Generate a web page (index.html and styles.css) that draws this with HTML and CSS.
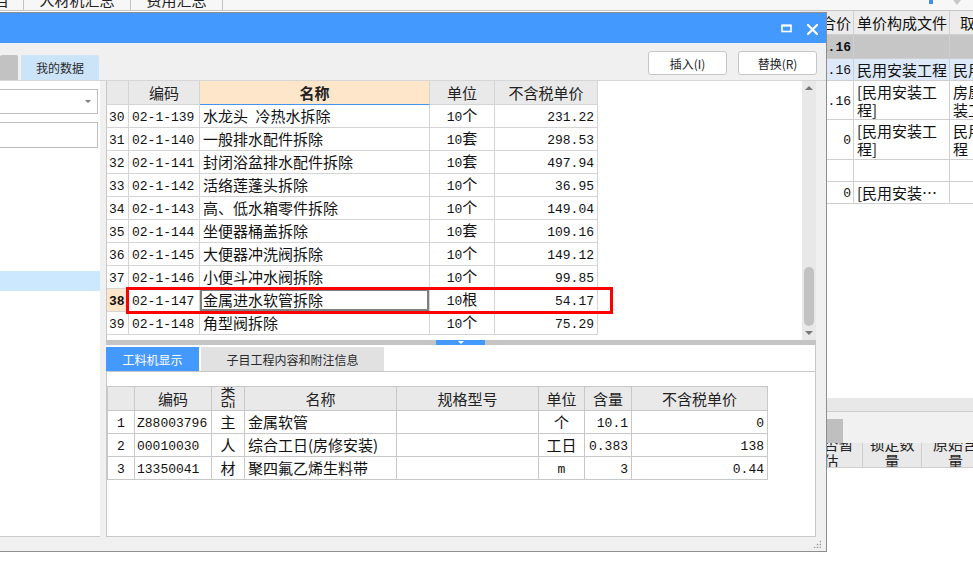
FILE: index.html
```html
<!DOCTYPE html>
<html lang="zh-CN">
<head>
<meta charset="utf-8">
<title>清单指引</title>
<link rel="stylesheet" href="styles.css">
</head>
<body>
<div class="app">
  <div class="app-tabs">
    <div class="app-tab first"><span>其他项目</span></div>
    <div class="app-tab t2"><span>人材机汇总</span></div>
    <div class="app-tab t3"><span>费用汇总</span></div>
    <div class="app-tools"><i class="mark"></i><i class="caret"></i></div>
  </div>
  <div class="app-body">
    <div class="app-hidden"></div>
    <div class="app-right">
      <table class="bgt">
        <colgroup><col class="bw1"><col class="bw2"><col class="bw3"></colgroup>
        <tr class="bh"><th class="r">合价</th><th>单价构成文件</th><th class="l12">取费专业</th></tr>
        <tr class="bsum"><td class="r"><span class="n b">541.16</span></td><td></td><td></td></tr>
        <tr class="bsel"><td class="r"><span class="n">541.16</span></td><td>民用安装工程</td><td>民用安装工程</td></tr>
        <tr class="btall"><td class="r mid"><span class="n">541.16</span></td><td class="top">[民用安装工<br>程]</td><td class="top">房屋修缮安<br>装工程</td></tr>
        <tr class="btall2"><td class="r mid"><span class="n">0</span></td><td class="top">[民用安装工<br>程]</td><td class="top">民用安装工<br>程</td></tr>
        <tr class="brow"><td></td><td></td><td></td></tr>
        <tr class="brow"><td class="r"><span class="n">0</span></td><td>[民用安装…</td><td></td></tr>
      </table>
      <div class="bg-band"></div>
      <div class="bg-strip"><div class="bg-block"></div></div>
      <div class="bg-head">
        <div class="bg-hc w63"><div>是否暂<br>估</div></div>
        <div class="bg-hc w59"><div>锁定数<br>量</div></div>
        <div class="bg-hc w68"><div>原始含<br>量</div></div>
      </div>
    </div>
  </div>
</div>

<div class="dialog">
  <div class="titlebar">
    <span class="tb-btn max"><svg width="11" height="9" viewBox="0 0 11 9"><rect x="1" y="1.5" width="9" height="6" fill="none" stroke="#fff" stroke-width="1.6"/><rect x="0.5" y="0.5" width="10" height="2" fill="#fff"/></svg></span>
    <span class="tb-btn close"><svg width="11" height="11" viewBox="0 0 11 11"><path d="M1 1L10 10M10 1L1 10" stroke="#fff" stroke-width="2.2" stroke-linecap="square"/></svg></span>
  </div>
  <div class="toolbar">
    <div class="ttab gray"></div>
    <div class="ttab active">我的数据</div>
    <button class="btn first-btn">插入(I)</button>
    <button class="btn">替换(R)</button>
  </div>
  <div class="content">
    <div class="leftpane">
      <div class="combo"><i class="dd"></i></div>
      <div class="input"></div>
      <div class="sel-row"></div>
    </div>
    <div class="vsplit"></div>
    <div class="mainpane">
      <div class="upper">
        <div class="grid-wrap">
          <table class="grid">
            <colgroup><col class="g1"><col class="g2"><col class="g3"><col class="g4"><col class="g5"></colgroup>
            <tr class="hd"><th></th><th>编码</th><th class="cur">名称</th><th>单位</th><th>不含税单价</th></tr>
            <tr><td class="rn"><span class="n">30</span></td><td><span class="n">02-1-139</span></td><td>水龙头&ensp;冷热水拆除</td><td class="c"><span class="n">10</span>个</td><td class="r"><span class="n">231.22</span></td></tr>
            <tr><td class="rn"><span class="n">31</span></td><td><span class="n">02-1-140</span></td><td>一般排水配件拆除</td><td class="c"><span class="n">10</span>套</td><td class="r"><span class="n">298.53</span></td></tr>
            <tr><td class="rn"><span class="n">32</span></td><td><span class="n">02-1-141</span></td><td>封闭浴盆排水配件拆除</td><td class="c"><span class="n">10</span>套</td><td class="r"><span class="n">497.94</span></td></tr>
            <tr><td class="rn"><span class="n">33</span></td><td><span class="n">02-1-142</span></td><td>活络莲蓬头拆除</td><td class="c"><span class="n">10</span>个</td><td class="r"><span class="n">36.95</span></td></tr>
            <tr><td class="rn"><span class="n">34</span></td><td><span class="n">02-1-143</span></td><td>高、低水箱零件拆除</td><td class="c"><span class="n">10</span>个</td><td class="r"><span class="n">149.04</span></td></tr>
            <tr><td class="rn"><span class="n">35</span></td><td><span class="n">02-1-144</span></td><td>坐便器桶盖拆除</td><td class="c"><span class="n">10</span>套</td><td class="r"><span class="n">109.16</span></td></tr>
            <tr><td class="rn"><span class="n">36</span></td><td><span class="n">02-1-145</span></td><td>大便器冲洗阀拆除</td><td class="c"><span class="n">10</span>个</td><td class="r"><span class="n">149.12</span></td></tr>
            <tr><td class="rn"><span class="n">37</span></td><td><span class="n">02-1-146</span></td><td>小便斗冲水阀拆除</td><td class="c"><span class="n">10</span>个</td><td class="r"><span class="n">99.85</span></td></tr>
            <tr class="active-row"><td class="rn cur-rn"><span class="n b">38</span></td><td><span class="n">02-1-147</span></td><td class="focus">金属进水软管拆除</td><td class="c"><span class="n">10</span>根</td><td class="r"><span class="n">54.17</span></td></tr>
            <tr><td class="rn"><span class="n">39</span></td><td><span class="n">02-1-148</span></td><td>角型阀拆除</td><td class="c"><span class="n">10</span>个</td><td class="r"><span class="n">75.29</span></td></tr>
          </table>
        </div>
        <div class="vscroll">
          <i class="arr up"></i>
          <div class="thumb"></div>
          <i class="arr down"></i>
        </div>
      </div>
      <div class="hsplit"><span class="grip"><i></i></span></div>
      <div class="lower">
        <div class="ltabs">
          <div class="ltab on">工料机显示</div>
          <div class="ltab">子目工程内容和附注信息</div>
        </div>
        <div class="lpanel">
          <table class="grid sub">
            <colgroup><col class="s1"><col class="s2"><col class="s3"><col class="s4"><col class="s5"><col class="s6"><col class="s7"><col class="s8"></colgroup>
            <tr class="hd"><th></th><th>编码</th><th class="two"><div>类<br>别</div></th><th>名称</th><th>规格型号</th><th>单位</th><th>含量</th><th>不含税单价</th></tr>
            <tr><td class="c"><span class="n">1</span></td><td class="p2"><span class="n">Z88003796</span></td><td class="c">主</td><td>金属软管</td><td></td><td class="c">个</td><td class="r"><span class="n">10.1</span></td><td class="r"><span class="n">0</span></td></tr>
            <tr><td class="c"><span class="n">2</span></td><td class="p2"><span class="n">00010030</span></td><td class="c">人</td><td>综合工日(房修安装)</td><td></td><td class="c">工日</td><td class="r"><span class="n">0.383</span></td><td class="r"><span class="n">138</span></td></tr>
            <tr><td class="c"><span class="n">3</span></td><td class="p2"><span class="n">13350041</span></td><td class="c">材</td><td>聚四氟乙烯生料带</td><td></td><td class="c"><span class="n">m</span></td><td class="r"><span class="n">3</span></td><td class="r"><span class="n">0.44</span></td></tr>
          </table>
        </div>
      </div>
    </div>
    <div class="rgap"></div>
  </div>
  <div class="status"><i class="sizegrip"></i></div>
</div>

<div class="redbox"></div>
</body>
</html>
```

FILE: styles.css
```css
* { box-sizing: border-box; margin: 0; padding: 0; }
html, body { width: 973px; height: 584px; overflow: hidden; background: #fff; }
body {
  position: relative;
  font-family: "Noto Sans CJK SC", "Noto Sans", sans-serif;
  font-size: 12px;
  color: #1a1a1a;
}
.n { font-family: "Liberation Mono", monospace; font-size: 13px; }
.b { font-weight: bold; }

/* ---------- background application ---------- */
.app { width: 973px; height: 584px; display: flex; flex-direction: column; }
.app-tabs {
  height: 11px; flex: none; display: flex; overflow: hidden;
  background: #f7f7f7; border-bottom: 1px solid #c6c6c6;
}
.app-tab {
  flex: none; display: flex; justify-content: center; overflow: hidden;
  border-right: 1px solid #c4c4c4; font-size: 15px; line-height: 16px; color: #222;
}
.app-tab span { margin-top: -8px; white-space: nowrap; }
.app-tab.first { width: 24px; justify-content: flex-end; padding-right: 14px; }
.app-tab.t2 { width: 107px; }
.app-tab.t3 { width: 92px; }
.app-tools { margin-left: auto; margin-right: 12px; display: flex; gap: 20px; }
.app-tools .mark { display: block; width: 4px; height: 4px; background: #3d8ff0; }
.app-tools .caret { display: block; width: 0; height: 0; border-left: 4px solid transparent; border-right: 4px solid transparent; border-top: 5px solid #c8c8c8; }

.app-body { flex: 1; display: flex; }
.app-hidden { width: 800px; flex: none; }
.app-right { flex: 1; display: flex; flex-direction: column; overflow: hidden; }

table { border-collapse: separate; border-spacing: 0; table-layout: fixed; }
td, th {
  border-right: 1px solid #d4d4d4; border-bottom: 1px solid #d4d4d4;
  padding: 0 3px; white-space: nowrap; overflow: hidden; font-weight: normal;
  text-align: left; vertical-align: middle; line-height: 16px;
}
.r { text-align: right; }
.c { text-align: center; }

.bgt { width: 230px; font-size: 15px; color: #111; }
.bgt .bw1 { width: 54px; }
.bgt .bw2 { width: 96px; }
.bgt .bw3 { width: 80px; }
.bgt td, .bgt th { border-color: #cfcfcf; }
.bgt th { background: #ececec; height: 24px; text-align: center; }
.bgt th.r { text-align: right; padding-right: 2px; }
.bgt th.l12 { text-align: left; padding-left: 10px; }
.bgt td.r { padding-right: 2px; }
.bgt .bsum td { height: 24px; background: #c6c6c6; }
.bgt .bsel td { height: 22px; background: #dde9f9; }
.bgt .btall td { height: 39px; }
.bgt .btall2 td { height: 40px; }
.bgt .brow td { height: 22px; }
.bgt td.top { vertical-align: top; line-height: 18px; padding-top: 2px; }

.bg-band { margin-top: 194px; height: 14px; background: #e8e8e8; border-bottom: 1px solid #cdcdcd; flex: none; }
.bg-strip { height: 31px; background: #f1f1f1; flex: none; padding-top: 7px; }
.bg-block { width: 43px; height: 24px; background: #bfbfbf; }
.bg-head { display: flex; height: 25px; flex: none; border-bottom: 1px solid #cfcfcf; background: #e9e9e9; }
.bg-hc { flex: none; overflow: hidden; border-right: 1px solid #cfcfcf; text-align: center; font-size: 15px; color: #222; }
.bg-hc div { margin-top: -8px; line-height: 17px; }
.w63 { width: 63px; }
.w59 { width: 59px; }
.w68 { width: 68px; }

/* ---------- dialog ---------- */
.dialog {
  position: absolute; left: 0; top: 12px; width: 827px; height: 540px;
  background: #f0f0f0; border: 1px solid #8e8e8e; border-left: none;
  display: flex; flex-direction: column;
}
.titlebar {
  height: 30px; flex: none; background: #4499ff;
  display: flex; align-items: center; justify-content: flex-end; padding-right: 8px;
}
.tb-btn { display: flex; align-items: center; justify-content: center; }
.tb-btn.max { margin-right: 15px; margin-top: 1px; }
.tb-btn.close { margin-top: 2px; }

.toolbar {
  height: 38px; flex: none; display: flex; align-items: flex-end;
  border-bottom: 1px solid #d6d6d6; padding-right: 9px;
}
.ttab { height: 25px; border-radius: 2px 2px 0 0; display: flex; align-items: center; justify-content: center; font-size: 12px; color: #2a2a2a; }
.ttab.gray { width: 18px; background: #c2c2c2; }
.ttab.active { width: 78px; margin-left: 3px; background: #cce4f8; }
.btn {
  align-self: flex-start; margin-top: 8px; width: 79px; height: 24px;
  background: #fff; border: 1px solid #c6c6c6; border-radius: 3px;
  font-family: inherit; font-size: 12px; color: #222;
}
.btn.first-btn { margin-left: auto; margin-right: 11px; }

.content { height: 456px; flex: none; display: flex; }
.leftpane { width: 100px; flex: none; background: #fff; border-bottom: 1px solid #cacaca; display: flex; flex-direction: column; }
.combo { margin-top: 8px; margin-left: -1px; width: 99px; height: 25px; border: 1px solid #bdbdbd; position: relative; }
.combo .dd { position: absolute; right: 6px; top: 10px; border-left: 3px solid transparent; border-right: 3px solid transparent; border-top: 3px solid #7a7a7a; }
.input { margin-top: 8px; margin-left: -1px; width: 99px; height: 26px; border: 1px solid #bdbdbd; }
.sel-row { margin-top: 123px; height: 20px; background: #cce8ff; }
.vsplit { width: 6px; flex: none; }
.mainpane { width: 710px; flex: none; display: flex; flex-direction: column; }
.rgap { width: 10px; flex: none; }

.upper { height: 259px; flex: none; display: flex; background: #fff; border-left: 1px solid #c8c8c8; }
.grid-wrap { flex: 1; overflow: hidden; }
.grid { font-size: 15px; color: #111; }
.grid tr { height: 23px; }
.grid tr.hd { height: 24px; }
.grid td { height: 23px; }
.grid th { height: 24px; background: #e9e9e9; text-align: center; color: #222; }
.grid .g1 { width: 22px; }
.grid .g2 { width: 71px; }
.grid .g3 { width: 230px; }
.grid .g4 { width: 65px; }
.grid .g5 { width: 103px; }
.grid th.cur { background: #fee6cb; font-weight: bold; border-bottom: 1px solid #3f95f0; }
.grid td.rn { padding: 0 0 0 2px; }
.grid td.cur-rn { background: #fee6cb; }
.grid td.focus { box-shadow: inset 0 0 0 2px #7f7f7f; }

.vscroll { width: 14px; flex: none; background: #e8e8e8; position: relative; }
.vscroll .arr { position: absolute; left: 3px; border-left: 4px solid transparent; border-right: 4px solid transparent; }
.vscroll .up { top: 5px; border-bottom: 4px solid #777; }
.vscroll .down { bottom: 5px; border-top: 4px solid #777; }
.vscroll .thumb { position: absolute; left: 2px; top: 186px; width: 10px; height: 59px; border-radius: 5px; background: #c2c2c2; }

.hsplit { height: 5px; flex: none; background: #c4c4c4; }
.hsplit .grip { display: flex; justify-content: center; margin-left: 330px; width: 49px; height: 5px; background: #4499ff; }
.hsplit .grip i { display: block; margin-top: 1px; border-left: 3px solid transparent; border-right: 3px solid transparent; border-top: 3px solid #fff; }

.lower { flex: 1; display: flex; flex-direction: column; background: #fff; border-right: 1px solid #c8c8c8; }
.ltabs { display: flex; margin-top: 2px; height: 24px; flex: none; }
.ltab { height: 24px; display: flex; align-items: center; justify-content: center; font-size: 12px; color: #2a2a2a; background: #e1e1e1; width: 183px; margin-left: 2px; }
.ltab.on { width: 93px; margin-left: 0; background: #4499ff; color: #fff; }
.lpanel { flex: 1; border: 1px solid #c8c8c8; border-right: none; border-bottom: 1px solid #c8c8c8; padding-top: 14px; }
.grid.sub { border-top: 1px solid #c8c8c8; border-left: 1px solid #c8c8c8; }
.grid.sub td, .grid.sub th { border-color: #c8c8c8; }
.grid.sub .s1 { width: 27px; }
.grid.sub .s2 { width: 77px; }
.grid.sub .s3 { width: 33px; }
.grid.sub .s4 { width: 152px; }
.grid.sub .s5 { width: 142px; }
.grid.sub .s6 { width: 46px; }
.grid.sub .s7 { width: 47px; }
.grid.sub .s8 { width: 136px; }
.grid.sub th.two { padding: 0; }
.grid.sub th.two div { height: 23px; overflow: hidden; line-height: 15px; margin-top: -4px; }
.grid td.p2 { padding-left: 2px; }

.status { height: 14px; flex: none; position: relative; }
.sizegrip {
  position: absolute; right: 5px; bottom: 3px; width: 8px; height: 8px;
  background:
    radial-gradient(circle, #9a9a9a 0.8px, transparent 1.1px) 0 0 / 3px 3px;
  clip-path: polygon(100% 0, 100% 100%, 0 100%);
}

.redbox { position: absolute; left: 126px; top: 287px; width: 487px; height: 27px; border: 3px solid #ff0000; }
```
